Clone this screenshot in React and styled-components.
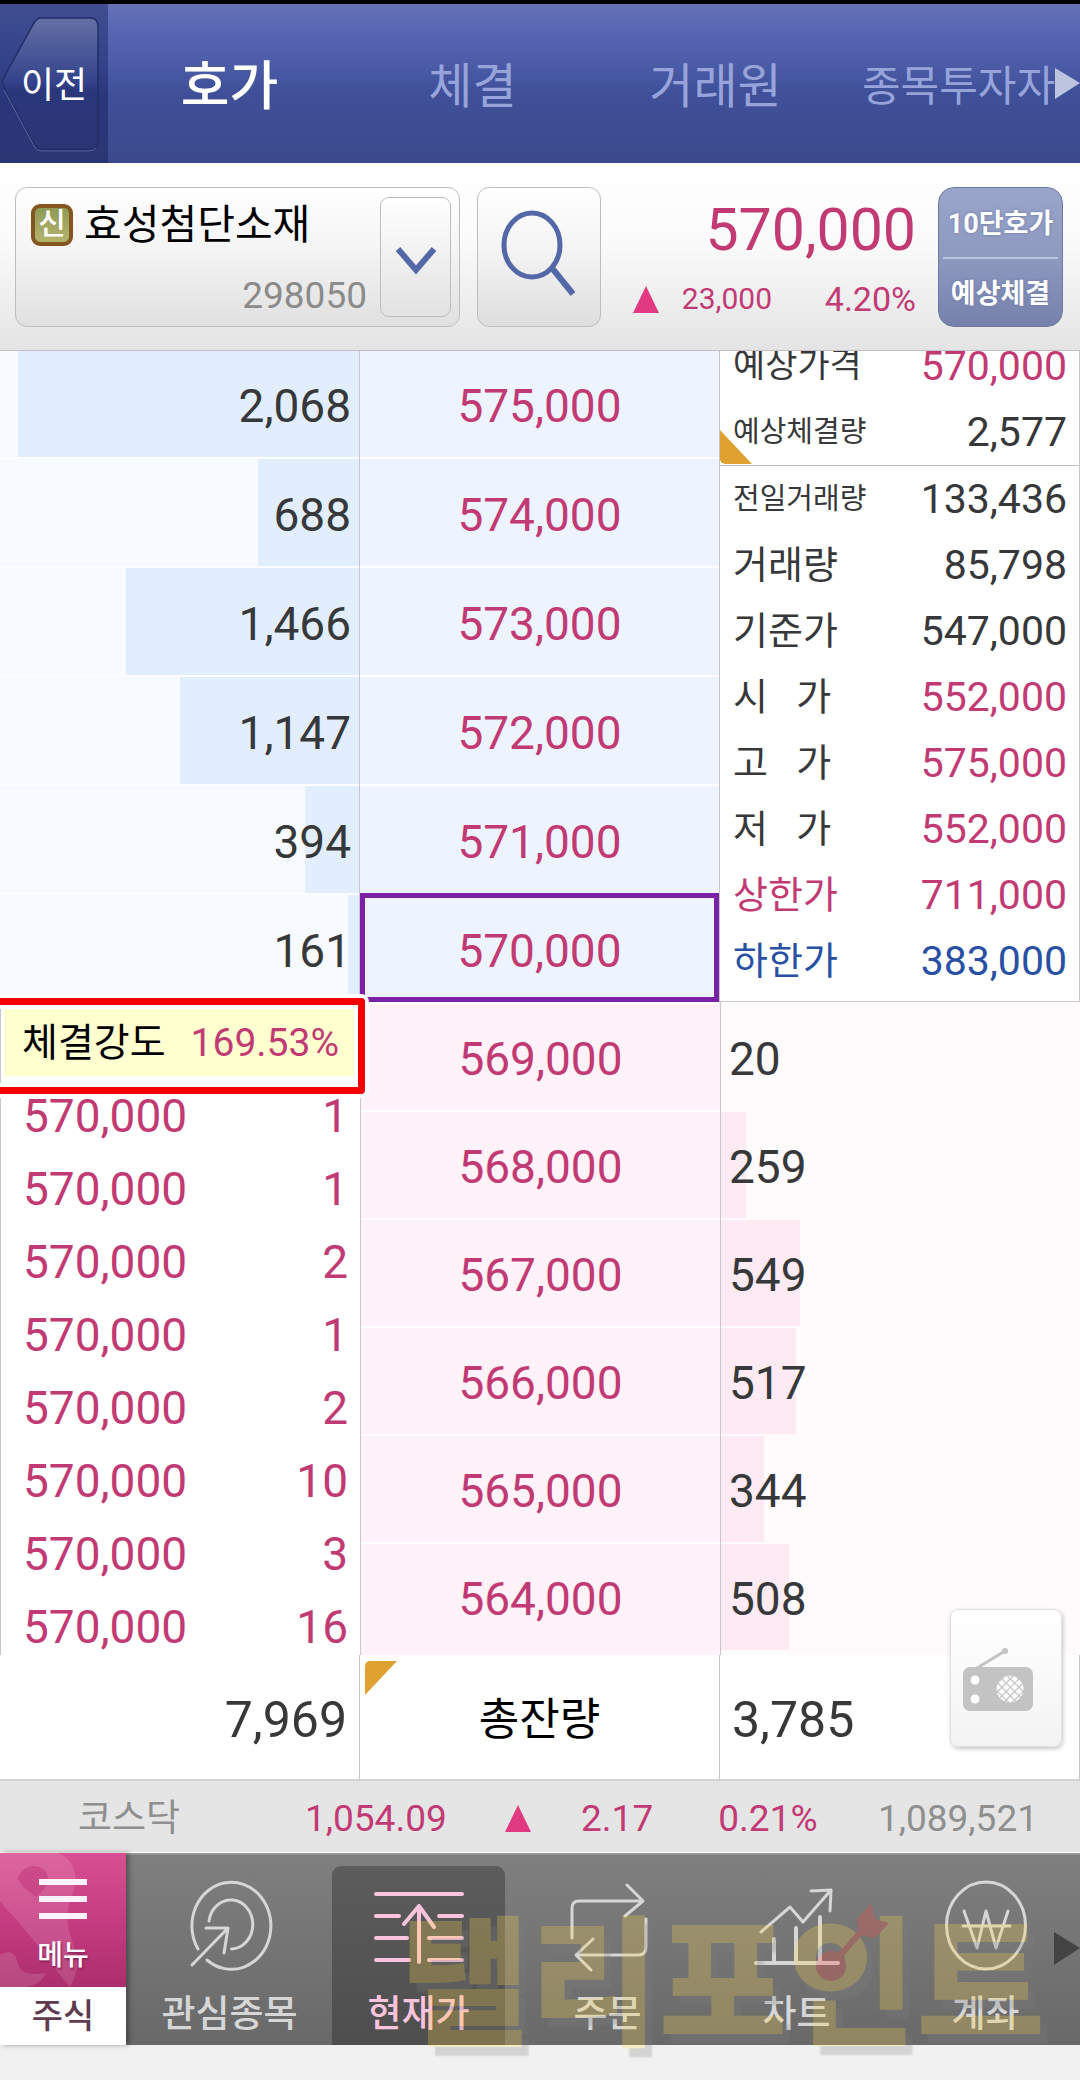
import React, { useState } from 'react';
import styled, { createGlobalStyle } from 'styled-components';

const UP = '#c23a74';
const DOWN = '#2850a4';
const INK = '#37383a';
const LINE = '#c8c6cc';

const GlobalStyle = createGlobalStyle`
  * {
    box-sizing: border-box;
  }

  body {
    margin: 0;
    background: #f1f1f1;
    font-family: Roboto, "Noto Sans CJK KR", sans-serif;
    color: ${INK};
  }

  button {
    border: 0;
    padding: 0;
    background: none;
    font: inherit;
    color: inherit;
    cursor: pointer;
  }

  table {
    width: 100%;
    border-collapse: collapse;
  }

  th, td {
    padding: 0;
    font-weight: 400;
  }
`;

const Page = styled.div`
  position: relative;
  overflow: hidden;
  padding-bottom: 35px;
  border-top: 4px solid #000000;
`;

/* ---------- top tabs ---------- */

const TopBar = styled.header`
  position: relative;
  display: flex;
  height: 159px;
  background: linear-gradient(#6471b6 0%, #5464b2 22%, #4a5aa5 40%, #3f5099 56%, #3c4a8c 100%);
`;

const BackButton = styled.button`
  position: relative;
  width: 108px;
  padding-top: 4px;
  background: linear-gradient(#3f4d90 0%, #33418a 40%, #2a367a 60%, #2a3674 100%);
  color: #ffffff;
  font-size: 36px;
  line-height: 48px;

  svg {
    position: absolute;
    inset: 0;
  }

  span {
    position: relative;
  }
`;

const TopTabs = styled.nav`
  flex: 1;
  display: grid;
  grid-template-columns: repeat(4, 1fr);
`;

const TopTab = styled.button`
  padding-top: 6px;
  color: ${props => (props.$active ? '#ffffff' : '#97a3db')};
  font-size: ${props => props.$size || 48}px;
  font-weight: ${props => (props.$active ? 500 : 400)};
  line-height: 60px;
  white-space: nowrap;
`;

const TopArrow = styled.svg`
  position: absolute;
  right: 0;
  top: 64px;
`;

/* ---------- stock header ---------- */

const StockHeader = styled.section`
  display: flex;
  height: 188px;
  padding: 24px 17px 23px 15px;
  background: linear-gradient(#ffffff 0%, #fbfbfb 40%, #e4e4e4 100%);
  border-bottom: 1px solid #c4c0c2;
`;

const StockPicker = styled.div`
  display: flex;
  width: 445px;
  padding: 9px 8px 9px 15px;
  border: 1px solid #bdbdbd;
  border-radius: 12px;
  background: linear-gradient(#ffffff, #f4f4f4 45%, #e0e0e0);
`;

const StockText = styled.div`
  flex: 1;
  display: flex;
  flex-direction: column;
  justify-content: space-between;
`;

const StockName = styled.div`
  display: flex;
  align-items: center;
  gap: 11px;
  height: 56px;
  color: #000000;
  font-size: 41px;
  line-height: 56px;
  white-space: nowrap;
`;

const Badge = styled.span`
  width: 42px;
  height: 42px;
  border: 4px solid #84561f;
  border-radius: 9px;
  background: linear-gradient(#8f9a58, #b5b36c);
  color: #ffffff;
  font-size: 30px;
  font-weight: 500;
  line-height: 32px;
  text-align: center;
`;

const StockCode = styled.div`
  padding-right: 13px;
  color: #8b8b8b;
  font-size: 37px;
  line-height: 42px;
  text-align: right;
`;

const PickerButton = styled.button`
  display: grid;
  place-items: center;
  width: 71px;
  padding-top: 8px;
  border: 1px solid #bdbdbd;
  border-radius: 9px;
  background: linear-gradient(#ffffff, #e2e2e2);
`;

const SearchButton = styled.button`
  width: 124px;
  margin-left: 17px;
  border: 1px solid #bdbdbd;
  border-radius: 12px;
  background: linear-gradient(#ffffff, #f4f4f4 45%, #dedede);
`;

const PriceBlock = styled.div`
  flex: 1;
  display: flex;
  flex-direction: column;
  padding: 6px 22px 0 32px;
  color: ${UP};
`;

const Price = styled.strong`
  font-size: 59px;
  font-weight: 400;
  line-height: 74px;
  text-align: right;
`;

const Change = styled.div`
  display: grid;
  grid-template-columns: 26px 1fr 144px;
  align-items: center;
  font-size: 34px;
  line-height: 64px;
  text-align: right;
`;

const Diff = styled.span`
  font-size: 30px;
`;

const ModeToggle = styled.div`
  display: grid;
  grid-template-rows: 1fr 1fr;
  width: 125px;
  padding: 0 4px;
  border: 1px solid #6d7a9f;
  border-radius: 16px;
  background: linear-gradient(#9aa5cb, #8e99c0 50%, #7681ac);
`;

const ModeButton = styled.button`
  padding-top: 3px;
  color: #ffffff;
  font-size: 27px;
  font-weight: 700;
  line-height: 40px;
  white-space: nowrap;
  text-shadow: 0 0 3px #6b76a4;

  & + & {
    border-top: 2px solid #b9c2de;
  }
`;

/* ---------- order book ---------- */

const Book = styled.main`
  position: relative;
  background: #ffffff;
`;

const Half = styled.section`
  display: grid;
  grid-template-columns: repeat(3, 1fr);
`;

const Column = styled.div`
  background: ${props => props.$bg || '#ffffff'};
  ${props => (props.$bid ? 'border-left' : 'border-right')}: 1px solid ${LINE};
  padding-bottom: ${props => (props.$bid ? 5 : 0)}px;
`;

const Cell = styled.div`
  display: flex;
  align-items: center;
  height: ${props => (props.$bid ? 108 : 109)}px;
  padding: 4px 8px 0;
  border-top: 2px solid #ffffff;
  font-size: 46px;
  line-height: 54px;

  &:first-child {
    height: ${props => (props.$bid ? 108 : 106)}px;
    border-top-width: ${props => (props.$bid ? 2 : 0)}px;
  }
`;

const AskQty = styled(Cell)`
  justify-content: flex-end;
  border-top-color: #fbfdff;
  background: linear-gradient(to left, #e2eefe ${props => props.$bar}%, #f7fbff ${props => props.$bar}%);
`;

const BidQty = styled(Cell)`
  border-top-color: #fffafc;
  background: linear-gradient(to right, #fdeaf2 ${props => props.$bar}%, #fffafc ${props => props.$bar}%);
`;

const PriceCell = styled(Cell)`
  justify-content: center;
  background: ${props => (props.$bid ? '#fff2f9' : '#edf4ff')};
  color: ${UP};
  outline: ${props => (props.$current ? '5px solid #7a22a6' : '0')};
  outline-offset: -5px;
`;

const InfoPanel = styled.div`
  border-right: 1px solid ${LINE};
  border-bottom: 1px solid ${LINE};
  background: #ffffff;
`;

const Expected = styled.div`
  position: relative;
  display: flex;
  align-items: flex-end;
  height: 115px;
  overflow: hidden;
  border-bottom: 1px solid #bdbdbd;
`;

const InfoLabel = styled.th`
  height: 66px;
  padding-left: 13px;
  color: ${props => props.$color || INK};
  font-size: ${props => props.$size || 38}px;
  line-height: 56px;
  text-align: left;
  white-space: pre;
`;

const InfoValue = styled.td`
  padding-right: 12px;
  color: ${props => props.$color || INK};
  font-size: 41px;
  line-height: 56px;
  text-align: right;
`;

const Corner = styled.i`
  position: absolute;
  left: ${props => (props.$low ? 0 : 5)}px;
  ${props => (props.$low ? 'bottom: 1px;' : 'top: 6px;')}
  width: 32px;
  height: 34px;
  border-radius: ${props => (props.$low ? '0 0 0 5px' : '5px 0 0 0')};
  background: #dfa12f;
  clip-path: ${props => (props.$low ? 'polygon(0 0, 100% 100%, 0 100%)' : 'polygon(0 0, 100% 0, 0 100%)')};
`;

const Trades = styled.div`
  position: relative;
  border-left: 1px solid ${LINE};
`;

const Strength = styled.div`
  display: flex;
  align-items: center;
  justify-content: space-between;
  height: 67px;
  margin: 7px 6px 3px 3px;
  padding: 0 15px 0 18px;
  background: #ffffcf;
  color: #000000;
  font-size: 39px;
  line-height: 56px;

  span {
    color: ${UP};
  }
`;

const Highlight = styled.div`
  position: absolute;
  left: -12px;
  right: -5px;
  top: -4px;
  height: 96px;
  border: 7px solid #f40000;
  border-radius: 4px;
  box-shadow: 0 0 0 4px #ffffff, inset 0 0 0 4px #ffffff;
`;

const TradeList = styled.div`
  height: 576px;
  overflow: hidden;
  color: ${UP};
  font-size: 46px;

  td {
    height: 73px;
    padding: 0 12px 0 22px;
  }

  td + td {
    text-align: right;
  }
`;

const Totals = styled.section`
  display: grid;
  grid-template-columns: repeat(3, 1fr);
  height: 126px;
  border-bottom: 2px solid #d3d3d5;
`;

const Total = styled.div`
  position: relative;
  display: flex;
  align-items: center;
  justify-content: ${props => props.$align || 'center'};
  padding: 5px 12px 0;
  border-right: 1px solid ${LINE};
  font-size: ${props => (props.$label ? 44 : 50)}px;
  line-height: 60px;
  color: ${props => (props.$label ? '#000000' : INK)};
`;

const RadioButton = styled.button`
  position: absolute;
  right: 18px;
  bottom: 34px;
  width: 112px;
  height: 138px;
  border: 1px solid #e0dfe0;
  border-radius: 8px;
  background: linear-gradient(#ffffff, #f3f3f3);
  box-shadow: 1px 2px 4px rgba(0, 0, 0, 0.22);
`;

/* ---------- index ticker ---------- */

const Ticker = styled.section`
  display: grid;
  grid-template-columns: 178fr 190fr 84fr 122fr 164fr 220fr;
  align-items: center;
  height: 72px;
  padding: 4px 42px 0 78px;
  border-bottom: 1px solid #ffffff;
  background: #e5e5e5;
  color: ${UP};
  font-size: 37px;
  line-height: 48px;
  text-align: right;
`;

const Muted = styled.span`
  color: #8f8f8f;
  text-align: ${props => props.$align || 'right'};
`;

/* ---------- bottom navigation ---------- */

const BottomBar = styled.nav`
  position: relative;
  display: flex;
  height: 192px;
  border-top: 2px solid #959595;
  background: linear-gradient(#7f7f7f, #696969);
`;

const MenuColumn = styled.div`
  display: flex;
  flex-direction: column;
  width: 126px;
  margin-top: -2px;
  box-shadow: 3px 0 5px rgba(0, 0, 0, 0.35);
`;

const MenuButton = styled.button`
  position: relative;
  height: 134px;
  background: linear-gradient(#d84f92, #c53c81 50%, #ac2e6d);
  color: #ffffff;
  font-size: 28px;
  font-weight: 500;
  line-height: 40px;

  svg {
    position: absolute;
    inset: 0;
  }

  span {
    position: relative;
    display: block;
    padding-top: 72px;
    text-shadow: 1px 2px 2px #8a2459;
  }
`;

const MarketButton = styled.button`
  flex: 1;
  background: #ffffff;
  color: #5e3b50;
  font-size: 34px;
  font-weight: 500;
  line-height: 50px;
`;

const NavItems = styled.div`
  flex: 1;
  display: grid;
  grid-template-columns: repeat(5, 1fr);
  padding: 11px 0 0 9px;
`;

const NavItem = styled.button`
  display: flex;
  flex-direction: column;
  align-items: center;
  gap: 14px;
  margin: 0 8px;
  padding-top: 9px;
  border-radius: 9px 9px 0 0;
  background: ${props => (props.$active ? 'linear-gradient(#5c5c5c, #4e4e4e)' : 'none')};
  color: ${props => (props.$active ? '#fbc3dc' : '#d6d6d6')};
  font-size: 37px;
  font-weight: 500;
  line-height: 52px;
  white-space: nowrap;
`;

const NavArrow = styled.svg`
  position: absolute;
  right: 0;
  top: 77px;
`;

const Watermark = styled.div`
  position: absolute;
  right: 35px;
  bottom: -28px;
  opacity: 0.26;
  color: #ffd84a;
  font-family: "Noto Sans CJK KR", sans-serif;
  font-size: 140px;
  font-weight: 900;
  line-height: 200px;
  white-space: nowrap;
  text-shadow: 7px 9px 2px #808080;
  pointer-events: none;

  svg {
    position: absolute;
    right: 152px;
    top: 16px;
  }
`;

const topTabs = [
  { label: '호가', size: 53 },
  { label: '체결' },
  { label: '거래원' },
  { label: '종목투자자', size: 42 },
];

const asks = [
  { price: '575,000', qty: '2,068', bar: 95 },
  { price: '574,000', qty: '688', bar: 28 },
  { price: '573,000', qty: '1,466', bar: 65 },
  { price: '572,000', qty: '1,147', bar: 50 },
  { price: '571,000', qty: '394', bar: 15 },
  { price: '570,000', qty: '161', bar: 3, current: true },
];

const bids = [
  { price: '569,000', qty: '20', bar: 0 },
  { price: '568,000', qty: '259', bar: 7 },
  { price: '567,000', qty: '549', bar: 22 },
  { price: '566,000', qty: '517', bar: 21 },
  { price: '565,000', qty: '344', bar: 12 },
  { price: '564,000', qty: '508', bar: 19 },
];

const expected = [
  { label: '예상가격', value: '570,000', size: 35, valueColor: UP },
  { label: '예상체결량', value: '2,577', size: 29 },
];

const info = [
  { label: '전일거래량', value: '133,436', size: 29 },
  { label: '거래량', value: '85,798' },
  { label: '기준가', value: '547,000' },
  { label: '시   가', value: '552,000', valueColor: UP },
  { label: '고   가', value: '575,000', valueColor: UP },
  { label: '저   가', value: '552,000', valueColor: UP },
  { label: '상한가', value: '711,000', color: UP, valueColor: UP },
  { label: '하한가', value: '383,000', color: DOWN, valueColor: DOWN },
];

const trades = ['1', '1', '2', '1', '2', '10', '3', '16'];

function InfoTable({ rows }) {
  return (
    <table>
      <tbody>
        {rows.map((row) => (
          <tr key={row.label}>
            <InfoLabel scope="row" $size={row.size} $color={row.color}>{row.label}</InfoLabel>
            <InfoValue $color={row.valueColor}>{row.value}</InfoValue>
          </tr>
        ))}
      </tbody>
    </table>
  );
}

const UpTriangle = styled.svg`
  justify-self: end;
`;

function UpMark() {
  return (
    <UpTriangle width="26" height="27" viewBox="0 0 26 27">
      <path d="M13 0 26 27H0z" fill="#e23a80" />
    </UpTriangle>
  );
}

function NavIcon({ children }) {
  return (
    <svg
      width="100"
      height="100"
      viewBox="0 0 100 100"
      fill="none"
      stroke="currentColor"
      strokeWidth="3"
      strokeLinecap="round"
      strokeLinejoin="round"
    >
      {children}
    </svg>
  );
}

const navItems = [
  {
    label: '관심종목',
    icon: (
      <>
        <path d="M18 74A39.5 43.5 0 1 1 27 85" />
        <path d="M29 46A22 24.5 0 1 1 51.500 74" />
        <path d="M12 90 48 53M26 53H48L44 78" />
      </>
    ),
  },
  {
    label: '현재가',
    icon: (
      <g strokeWidth="4">
        <path d="M7 19H93M7 41H30M70 41H93M7 63H38M60 63H93M7 85H40M60 85H93" />
        <path d="M50 87V31M35 49 50 31 65 52" />
      </g>
    ),
  },
  {
    label: '주문',
    icon: (
      <>
        <path d="M14 63V33Q14 26 21 26H84M69 10 85 26 67 41" />
        <path d="M88 44V72Q88 80 80 80H19M35 64 18 80 33 95" />
      </>
    ),
  },
  {
    label: '차트',
    icon: (
      <>
        <path d="M9 88H91M27 64V86M49 53V86M73 42V86" strokeWidth="4" />
        <path d="M14 57 43 32 56 47 84 15M64 16 84 15 83 36" />
      </>
    ),
  },
  {
    label: '계좌',
    icon: (
      <>
        <ellipse cx="50" cy="50.500" rx="39.500" ry="43.500" />
        <path d="M28 36 41 73 50 36 60 73 72 36M27 51H74" />
      </>
    ),
  },
];

function App() {
  const [tab, setTab] = useState('호가');
  const [menu, setMenu] = useState('현재가');

  return (
    <Page>
      <GlobalStyle />

      <TopBar>
        <BackButton>
          <svg width="108" height="159" viewBox="0 0 108 159">
            <defs>
              <linearGradient id="back" x2="0" y2="1">
                <stop offset="0" stopColor="#6470a6" />
                <stop offset="0.500" stopColor="#33418a" />
                <stop offset="0.550" stopColor="#2b377c" />
                <stop offset="1" stopColor="#2a3674" />
              </linearGradient>
            </defs>
            <path
              d="M41 14H90Q98 14 98 23V136Q98 145 90 145H41Q37 145 34 140L4 84Q1 78 4 73L34 19Q37 14 41 14z"
              fill="url(#back)"
              stroke="#232d66"
              strokeWidth="1.500"
            />
            <path d="M4 86 34 142Q37 147 41 147H88Q94 147 96 144" fill="none" stroke="#5763a0" />
          </svg>
          <span>이전</span>
        </BackButton>
        <TopTabs>
          {topTabs.map((item) => (
            <TopTab
              key={item.label}
              $active={tab === item.label}
              $size={item.size}
              onClick={() => setTab(item.label)}
            >
              {item.label}
            </TopTab>
          ))}
        </TopTabs>
        <TopArrow width="25" height="31" viewBox="0 0 25 31">
          <path d="M0 0 25 15 0 31z" fill="#bcc4e0" />
        </TopArrow>
      </TopBar>

      <StockHeader>
        <StockPicker>
          <StockText>
            <StockName>
              <Badge>신</Badge>
              효성첨단소재
            </StockName>
            <StockCode>298050</StockCode>
          </StockText>
          <PickerButton aria-label="종목 목록">
            <svg width="42" height="30" viewBox="0 0 42 30">
              <path d="M3 3 21 24 39 3" fill="none" stroke="#5468a8" strokeWidth="6" />
            </svg>
          </PickerButton>
        </StockPicker>
        <SearchButton aria-label="검색">
          <svg width="80" height="92" viewBox="0 0 80 92">
            <ellipse cx="33" cy="36" rx="28" ry="32" fill="none" stroke="#5468a8" strokeWidth="5" />
            <path d="M53 59 74 85" stroke="#5468a8" strokeWidth="6" />
          </svg>
        </SearchButton>
        <PriceBlock>
          <Price>570,000</Price>
          <Change>
            <UpMark />
            <Diff>23,000</Diff>
            <span>4.20%</span>
          </Change>
        </PriceBlock>
        <ModeToggle>
          <ModeButton>10단호가</ModeButton>
          <ModeButton>예상체결</ModeButton>
        </ModeToggle>
      </StockHeader>

      <Book>
        <Half>
          <Column>
            {asks.map((row) => (
              <AskQty key={row.price} $bar={row.bar}>{row.qty}</AskQty>
            ))}
          </Column>
          <Column>
            {asks.map((row) => (
              <PriceCell key={row.price} $current={row.current}>{row.price}</PriceCell>
            ))}
          </Column>
          <InfoPanel>
            <Expected>
              <Corner $low />
              <InfoTable rows={expected} />
            </Expected>
            <InfoTable rows={info} />
          </InfoPanel>
        </Half>

        <Half>
          <Trades>
            <Highlight />
            <Strength>
              체결강도
              <span>169.53%</span>
            </Strength>
            <TradeList>
              <table>
                <tbody>
                  {trades.map((qty, i) => (
                    <tr key={i}>
                      <td>570,000</td>
                      <td>{qty}</td>
                    </tr>
                  ))}
                </tbody>
              </table>
            </TradeList>
          </Trades>
          <Column $bid $bg="#fff2f9">
            {bids.map((row) => (
              <PriceCell key={row.price} $bid>{row.price}</PriceCell>
            ))}
          </Column>
          <Column $bid $bg="#fffafc">
            {bids.map((row) => (
              <BidQty key={row.price} $bid $bar={row.bar}>{row.qty}</BidQty>
            ))}
          </Column>
        </Half>

        <Totals>
          <Total $align="flex-end">7,969</Total>
          <Total $label>
            <Corner />
            총잔량
          </Total>
          <Total $align="flex-start">3,785</Total>
        </Totals>

        <RadioButton aria-label="라디오">
          <svg width="110" height="136" viewBox="0 0 110 136">
            <defs>
              <pattern id="mesh" width="6" height="6" patternUnits="userSpaceOnUse" patternTransform="rotate(45)">
                <rect width="6" height="6" fill="#ffffff" />
                <path d="M0 0H6M0 0V6" stroke="#c3c3c3" strokeWidth="2.500" />
              </pattern>
            </defs>
            <path d="M26 58 54 41" stroke="#c3c3c3" strokeWidth="3" />
            <circle cx="54" cy="41" r="3" fill="#c3c3c3" />
            <rect x="12" y="57" width="70" height="44" rx="7" fill="#c3c3c3" />
            <circle cx="24" cy="70" r="4.500" fill="#ffffff" />
            <circle cx="24" cy="89" r="4.500" fill="#ffffff" />
            <circle cx="59" cy="79" r="13.500" fill="url(#mesh)" />
          </svg>
        </RadioButton>
      </Book>

      <Ticker>
        <Muted $align="left">코스닥</Muted>
        <span>1,054.09</span>
        <UpMark />
        <span>2.17</span>
        <span>0.21%</span>
        <Muted>1,089,521</Muted>
      </Ticker>

      <BottomBar>
        <MenuColumn>
          <MenuButton>
            <svg width="126" height="134" viewBox="0 0 126 134">
              <path
                d="M0 0H58C74 6 80 24 72 42C66 56 66 70 72 88C78 104 80 116 70 134C62 124 48 108 36 90C20 70 6 56 0 48z"
                fill="#ffffff"
                opacity="0.130"
              />
              <path d="M18 26C22 10 44 8 48 24C48 34 42 38 36 44C28 38 20 32 18 26z" fill="#b8296f" opacity="0.400" />
              <path d="M0 102C10 96 16 100 18 112C22 122 34 122 46 120C40 132 30 134 24 134H0z" fill="#ffffff" opacity="0.130" />
              <path d="M39 29H87M39 46H87M39 63H87" stroke="#fff2fa" strokeWidth="6" />
            </svg>
            <span>메뉴</span>
          </MenuButton>
          <MarketButton>주식</MarketButton>
        </MenuColumn>
        <NavItems>
          {navItems.map((item) => (
            <NavItem
              key={item.label}
              $active={menu === item.label}
              onClick={() => setMenu(item.label)}
            >
              <NavIcon>{item.icon}</NavIcon>
              {item.label}
            </NavItem>
          ))}
        </NavItems>
        <NavArrow width="26" height="33" viewBox="0 0 26 33">
          <path d="M0 0 26 16 0 33z" fill="#434343" />
        </NavArrow>
        <Watermark>
          탤리포인트
          <svg width="100" height="120" viewBox="0 0 100 120">
            <circle cx="38" cy="77" r="15" fill="#ff4a3d" />
            <path d="M38 77 72 38" stroke="#ff4a3d" strokeWidth="6" />
            <path d="M64 30 78 14 82 30 96 34 82 49 66 46z" fill="#ff4a3d" />
          </svg>
        </Watermark>
      </BottomBar>
    </Page>
  );
}

export default App;
